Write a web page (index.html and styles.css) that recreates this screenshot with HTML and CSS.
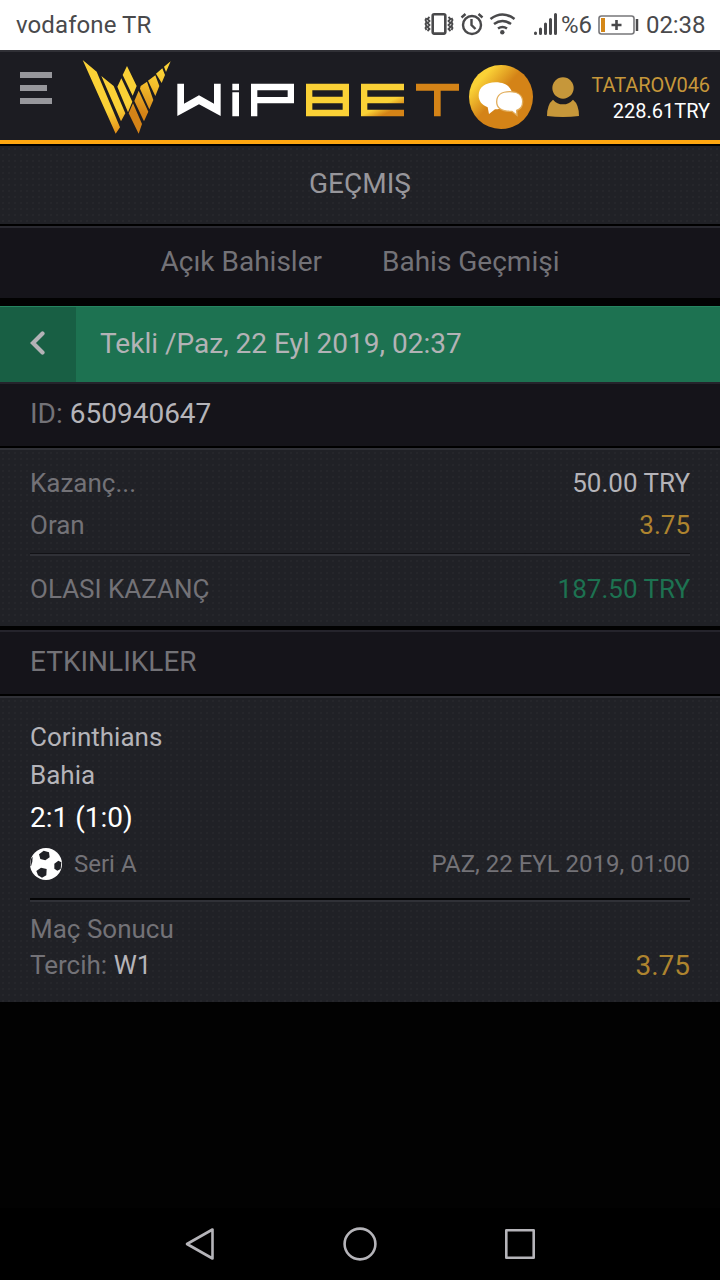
FILE: index.html
```html
<!DOCTYPE html>
<html lang="tr">
<head>
<meta charset="utf-8">
<title>Wipbet</title>
<link rel="stylesheet" href="styles.css">
</head>
<body>
<div class="status">
  <span class="carrier">vodafone TR</span>
  <svg class="sys" width="100" height="50" viewBox="420 0 100 50" fill="none" stroke="#49494b" stroke-width="2.400">
    <rect x="432.700" y="14.200" width="12.600" height="19.400" rx="1.500" stroke-width="2.600"/>
    <path d="M429.500 17l-2 2 2 2-2 2 2 2-2 2 2 2-2 2M426.500 18l-1 2 1 2-1 2 1 2-1 2 1 2M448.500 17l2 2-2 2 2 2-2 2 2 2-2 2 2 2M451.500 18l1 2-1 2 1 2-1 2 1 2-1 2" stroke-width="1.800"/>
    <circle cx="472" cy="25" r="9"/><path d="M471.500 19v6l4 4M461.500 17.500l4-3.500M482.500 17.500l-4-3.500"/>
    <path d="M490.500 19q12-9 24 0M494 24q8.500-6 17 0M498 28.500q4.500-3 9 0" stroke-width="2.600"/><circle cx="502.300" cy="32.300" r="2.200" fill="#49494b" stroke="none"/>
  </svg>
  <svg class="signal" width="28" height="50" viewBox="532 0 28 50" stroke="#49494b" stroke-width="3" stroke-linecap="round"><path d="M535.500 33v.5M540.500 29v4.500M545.500 24v9.500M550.500 19.500v14M555.500 14.500v19"/></svg>
  <span class="percent">%6</span>
  <svg class="battery" width="42" height="50" viewBox="597 0 42 50">
    <rect x="599" y="16" width="35" height="18" rx="2.500" fill="none" stroke="#77777a" stroke-width="1.600"/><path d="M601 18h4v14h-4z" fill="#d48718"/><path d="M611.500 25h10M616.500 20v10" stroke="#49494b" stroke-width="2.600"/><path d="M637 19v12" stroke="#49494b" stroke-width="2.500"/>
  </svg>
  <span class="clock">02:38</span>
</div>

<header class="header">
  <svg class="menu" width="32" height="34" viewBox="0 0 32 34" fill="#97979c"><path d="M0 0h32v6H0zM0 13h27v6H0zM0 26h32v6H0z"/></svg>
  <svg class="logo" width="380" height="88" viewBox="80 52 380 88">
    <defs>
      <linearGradient id="wing" gradientUnits="userSpaceOnUse" x1="120" y1="90" x2="175" y2="240"><stop offset=".55" stop-color="#fad136"/><stop offset="1" stop-color="#e18b17"/></linearGradient>
      <linearGradient id="feather" gradientUnits="userSpaceOnUse" x1="250" y1="60" x2="220" y2="190"><stop offset="0" stop-color="#fad136"/><stop offset=".35" stop-color="#f3bd2b"/><stop offset="1" stop-color="#d48317"/></linearGradient>
      <linearGradient id="bars" gradientUnits="userSpaceOnUse" x1="255" y1="140" x2="285" y2="200"><stop offset=".48" stop-color="#fad136"/><stop offset=".9" stop-color="#d48317"/></linearGradient>
    </defs>
    <g transform="translate(70 50) scale(.33333)">
      <path fill="url(#wing)" d="M38 30L80 65 150 232 137 251zM94 78L131 108 166 190 153 214zM142 110L154 85 187 155 174 187zM158 75L171 48 200 108 188 137z"/>
      <path fill="url(#feather)" d="M176 190L189 160 216 222 206 251zM193 153L206 122 235 185 222 214zM210 116L212 108 231 95 250 150 238 178zM234 92L256 76 268 108 256 138zM258 71L277 55 285 75 275 99zM282 50L302 34 288 66z"/>
      <path fill="#fff" fill-rule="evenodd" d="M322 101h20v60l45-25 45 25v-60h20v97l-65-35-65 35zM487 101h20v20h-20zM487 127h20v72h-20zM543 101h129v59H562v39h-19zM562 121v20h91v-20z"/>
    </g>
    <g transform="translate(290 50) scale(.33333)" fill-rule="evenodd">
      <path fill="#fad136" d="M48 101h129v98H48zM67 121v19h91v-19zM67 160v19h91v-19z"/>
      <path fill="url(#bars)" d="M213 101h129v20H232v19h110v20H232v19h110v20H213z"/>
      <path fill="#d48317" d="M378 101h129v21h-55v77h-20v-77h-54z"/>
    </g>
  </svg>
  <svg class="chat" width="64" height="64" viewBox="0 0 192 192">
    <defs><linearGradient id="coin" x1="0" y1=".1" x2=".55" y2=".6"><stop offset=".3" stop-color="#fad136"/><stop offset=".8" stop-color="#d48317"/></linearGradient></defs>
    <circle cx="96" cy="96" r="96" fill="url(#coin)"/>
    <path d="M80 52c29 0 50 15 50 39s-18 42-52 42l-18 14-4-20c-17-7-27-18-27-36 0-24 21-39 51-39z" fill="#fff"/>
    <path d="M122 80c25 0 39 12 39 30 0 13-7 22-18 26l1 15-15-12c-30 0-46-10-46-29s15-30 39-30z" fill="#fff" stroke="#e2ae5c" stroke-width="4"/>
  </svg>
  <svg class="user" width="32" height="40" viewBox="0 0 96 120" fill="#c6973a"><circle cx="48" cy="33" r="32"/><path d="M18 68q12 14 30 14t30-14q18 14 18 49-48 6-96 0 0-35 18-49z"/></svg>
  <div class="account"><span class="name">TATAROV046</span><span class="balance">228.61TRY</span></div>
</header>

<main class="page">
  <h1 class="title dots">GEÇMIŞ</h1>
  <nav class="tabs"><span class="tab-open">Açık Bahisler</span><span class="tab-past">Bahis Geçmişi</span></nav>
  <div class="bet">
    <span class="back"><svg width="16" height="24" viewBox="0 0 16 24"><path d="M12.500 2.500L3 12l9.500 9.500" fill="none" stroke="#b3b2b6" stroke-width="4.200" stroke-linecap="round"/></svg></span>
    <span class="bet-name">Tekli /Paz, 22 Eyl 2019, 02:37</span>
  </div>
  <div class="strip"><span>ID: <b>650940647</b></span></div>
  <section class="card stake dots">
    <div class="row first"><span>Kazanç...</span><span class="light">50.00 TRY</span></div>
    <div class="row"><span>Oran</span><span class="gold">3.75</span></div>
    <div class="rule"></div>
    <div class="row total"><span>OLASI KAZANÇ</span><span class="green">187.50 TRY</span></div>
  </section>
  <div class="strip events">ETKINLIKLER</div>
  <section class="card event dots">
    <div class="team">Corinthians</div>
    <div class="team">Bahia</div>
    <div class="score">2:1 (1:0)</div>
    <div class="league">
      <svg width="32" height="32" viewBox="0 0 96 96"><circle cx="48" cy="48" r="48" fill="#fff"/><path fill="#202126" d="M27 19l14-11 16 5 2 15-13 9-15-4zM19 69l14-10 17 4-1 19-13 7-12-7zM73 47l12-9 9 5-2 20-10 5-9-6zM2 34l6-8-1 15-4 14-2-2z"/></svg>
      <span>Seri A</span><span class="date">PAZ, 22 EYL 2019, 01:00</span>
    </div>
    <div class="rule dark"></div>
    <div class="market">Maç Sonucu</div>
    <div class="row pick"><span>Tercih: <b>W1</b></span><span class="gold odds">3.75</span></div>
  </section>
</main>

<footer class="nav">
  <svg width="360" height="72" viewBox="180 1208 360 72" fill="none" stroke="#b5b4b9" stroke-width="2.600" stroke-linejoin="round"><path d="M187 1244L212.500 1229.500V1258.500z"/><circle cx="360" cy="1244" r="15.400"/><rect x="506.300" y="1230.300" width="27.400" height="27.400"/></svg>
</footer>
</body>
</html>
```
FILE: styles.css
```css
* { box-sizing: border-box; }
body {
  margin: 0;
  width: 720px;
  height: 1280px;
  display: flex;
  flex-direction: column;
  overflow: hidden;
  background: #020202;
  color: #737277;
  font-family: Roboto, "Noto Sans", sans-serif;
  font-size: 26px;
  white-space: nowrap;
}
svg { display: block; flex: none; }
b { font-weight: 400; color: #b5b4b9; }

.status { height: 50px; display: flex; align-items: center; padding-left: 16px; background: #fff; color: #49494b; font-size: 24px; }
.carrier { width: 404px; letter-spacing: .1px; }
.signal { margin-left: 12px; }
.percent { width: 36px; margin-left: 1px; }
.battery { margin-right: 7px; }
.clock { letter-spacing: -.1px; }

.header {
  height: 96px;
  display: flex;
  align-items: flex-start;
  padding-left: 20px;
  border-top: 2px solid #303036;
  border-bottom: 2px solid #000;
  background: linear-gradient(#ffa711, #ffa711) 0 88px / 100% 4px no-repeat, #1c1c22;
  font-size: 20px;
}
.menu { margin-top: 20px; }
.logo { margin-left: 28px; }
.chat { margin: 13px 0 0 9px; }
.user { margin: 25px 0 0 14px; }
.account { width: 131px; padding-top: 20px; display: flex; flex-direction: column; align-items: flex-end; line-height: 26px; }
.name { color: #c6973a; letter-spacing: -.1px; }
.balance { color: #fff; }

.dots { background: radial-gradient(circle, #27282d 0 .6px, transparent 1px) 0 0 / 6px 6px, #202126; }
.title { height: 80px; margin: 0; text-align: center; font-weight: 400; font-size: 28px; line-height: 75px; color: #97969b; border-bottom: 2px solid #000; }
.tabs { height: 72px; display: flex; justify-content: center; gap: 60px; line-height: 67px; font-size: 28px; background: #15141a; border-top: 2px solid #292930; }
.bet { height: 76px; margin-top: 8px; display: flex; background: #1d7251; color: #b3b2b6; font-size: 28px; line-height: 73px; border-top: 1px solid #268460; }
.back { width: 76px; padding-bottom: 3px; display: flex; align-items: center; justify-content: center; background: #185f44; }
.bet-name { padding-left: 24px; }
.strip { height: 66px; padding-left: 30px; background: #15141a; border-top: 2px solid #25242c; border-bottom: 2px solid #000; font-size: 28px; line-height: 59px; }
.card { padding: 0 30px; border-top: 2px solid #303137; }
.stake { height: 178px; }
.row { height: 42px; display: flex; justify-content: space-between; line-height: 42px; }
.first { margin-top: 12px; }
.light { color: #b5b4b9; }
.gold { color: #ae842f; }
.green { color: #1d7251; }
.rule { height: 3px; margin-top: 7px; border-top: 1px solid #121216; border-bottom: 2px solid #303137; }
.total { margin-top: 12px; }
.events { margin-top: 4px; }
.event { height: 306px; padding-top: 20px; }
.team { height: 38px; line-height: 38px; color: #b5b4b9; }
.score { height: 46px; line-height: 48px; font-size: 28px; color: #fff; }
.league { height: 48px; display: flex; align-items: center; gap: 12px; font-size: 24px; }
.date { margin-left: auto; }
.dark { height: 4px; margin-top: 10px; border-top: 2px solid #050506; }
.market { height: 36px; margin-top: 9px; line-height: 36px; }
.pick { height: 36px; line-height: 36px; }
.odds { font-size: 28px; line-height: 38px; }
.nav { height: 72px; margin-top: auto; display: flex; justify-content: center; background: #000; }
```
